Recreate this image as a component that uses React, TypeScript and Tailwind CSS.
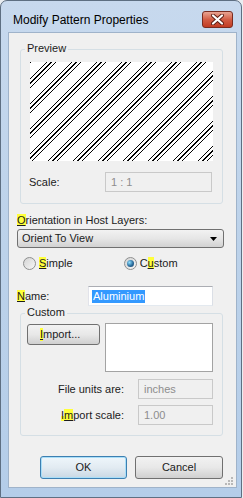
import React from 'react';

const font = { fontFamily: '"Liberation Sans", Arial, sans-serif' };

function Mn({ children }: { children: React.ReactNode }) {
  return <span className="bg-[#ffff3a] underline underline-offset-[1px]">{children}</span>;
}

function Hatch() {
  const lines: React.ReactNode[] = [];
  for (let k = -5; k < 12; k++) {
    for (let j = 0; j < 3; j++) {
      const x0 = 17 + k * 25 + j * 4.5;
      lines.push(<line key={`${k}-${j}`} x1={x0 - 99} y1={99} x2={x0} y2={0} stroke="#000" strokeWidth={1} />);
    }
  }
  return (
    <svg width="183" height="99" viewBox="0 0 183 99" className="block bg-white" shapeRendering="crispEdges">
      {lines}
    </svg>
  );
}

function Radio({ checked }: { checked?: boolean }) {
  return (
    <span className="flex h-[13px] w-[13px] items-center justify-center rounded-full border border-[#8e8f8f] bg-gradient-to-br from-[#d4d4d4] to-[#f7f7f7]">
      {checked && (
        <span className="h-[7px] w-[7px] rounded-full bg-[radial-gradient(circle_at_35%_35%,#8fe0ff,#2a6b9c_55%,#173d5c)]" />
      )}
    </span>
  );
}

function DisabledBox({ text, w }: { text: string; w: string }) {
  return (
    <div className={`flex h-[20px] ${w} items-center border border-[#c9c9c9] bg-[#f0f0f0] pl-[5px] text-[#8d8d8d]`}>
      {text}
    </div>
  );
}

export default function App() {
  return (
    <div className="h-[498px] w-[243px] bg-[#e9edf1] text-[11px] leading-[13px] text-[#1b1b1b]" style={font}>
      <div className="flex h-[498px] w-[242px] flex-col rounded-t-[7px] border border-[#5e6f82] bg-gradient-to-b from-[#c7d9ee] via-[#bcd2ea] to-[#b4cde9]">
        {/* title bar */}
        <div className="flex h-[31px] shrink-0 items-start justify-between pl-[12px] pr-[8px]">
          <span className="mt-[12px] text-[12px] leading-[14px] text-black">Modify Pattern Properties</span>
          <div className="mt-[10px] flex h-[17px] w-[31px] items-center justify-center rounded-[3px] border border-[#7a2c20] bg-gradient-to-b from-[#e8a493] via-[#d35d45] to-[#c13b22]">
            <svg width="13" height="11" viewBox="0 0 13 11">
              <path d="M2 1.5 L11 9.5 M11 1.5 L2 9.5" stroke="#5b1c12" strokeWidth="4" strokeLinecap="round" />
              <path d="M2 1.5 L11 9.5 M11 1.5 L2 9.5" stroke="#fff" strokeWidth="2.2" strokeLinecap="round" />
            </svg>
          </div>
        </div>

        {/* content */}
        <div className="relative ml-[7px] h-[456px] w-[229px] border border-[#9fb3ca] bg-[#f0f0f0]">
          {/* Preview group */}
          <div className="relative ml-[11px] mt-[16px] h-[155px] w-[203px] rounded-[3px] border border-[#d5dfe5]">
            <span className="absolute left-[4px] top-[-8px] bg-[#f0f0f0] px-[2px]">Preview</span>
            <div className="ml-[9px] mt-[12px]">
              <Hatch />
            </div>
            <div className="mt-[11px] flex items-center">
              <span className="ml-[8px] w-[76px]">Scale:</span>
              <DisabledBox text="1 : 1" w="w-[107px]" />
            </div>
          </div>

          <div className="ml-[8px] mt-[10px]">
            <Mn>O</Mn>rientation in Host Layers:
          </div>
          <div className="ml-[8px] mt-[2px] flex h-[19px] w-[207px] items-center justify-between rounded-[3px] border border-[#707070] bg-gradient-to-b from-[#f2f2f2] via-[#e6e6e6] to-[#d2d2d2] pl-[4px] pr-[6px]">
            <span>Orient To View</span>
            <svg width="7" height="4" viewBox="0 0 7 4">
              <path d="M0 0 H7 L3.5 4 Z" fill="#000" />
            </svg>
          </div>

          <div className="mt-[8px] flex h-[14px] items-center">
            <span className="ml-[14px]">
              <Radio />
            </span>
            <span className="ml-[3px]">
              <Mn>S</Mn>imple
            </span>
            <span className="ml-[51px]">
              <Radio checked />
            </span>
            <span className="ml-[3px]">
              C<Mn>u</Mn>stom
            </span>
          </div>

          <div className="mt-[16px] flex items-center">
            <span className="ml-[8px] w-[71px]">
              <Mn>N</Mn>ame:
            </span>
            <div className="flex h-[20px] w-[125px] items-center border border-[#abadb3] border-b-[#e3e9ef] border-l-[#e2e3ea] border-r-[#dbdfe6] bg-white pl-[3px]">
              <span className="bg-[#3399ff] px-[1px] text-white">Aluminium</span>
            </div>
          </div>

          {/* Custom group */}
          <div className="relative ml-[11px] mt-[7px] h-[123px] w-[203px] rounded-[3px] border border-[#d5dfe5]">
            <span className="absolute left-[4px] top-[-8px] bg-[#f0f0f0] px-[2px]">Custom</span>
            <div className="ml-[6px] mt-[9px] flex items-start">
              <div className="mt-[1px] flex h-[21px] w-[73px] items-center rounded-[3px] border border-[#707070] bg-gradient-to-b from-[#f2f2f2] via-[#e8e8e8] to-[#d0d0d0] pl-[12px]">
                <Mn>I</Mn>mport...
              </div>
              <div className="ml-[5px] h-[49px] w-[108px] border border-[#a3a3a3] bg-white" />
            </div>
            <div className="mt-[7px] flex items-center justify-end gap-[14px] pr-[9px]">
              <span>File units are:</span>
              <DisabledBox text="inches" w="w-[75px]" />
            </div>
            <div className="mt-[6px] flex items-center justify-end gap-[14px] pr-[9px]">
              <span>
                <span className="bg-gradient-to-b from-transparent from-[55%] to-[#ffff3a] to-[55%]">I</span>
                <Mn>m</Mn>port scale:
              </span>
              <DisabledBox text="1.00" w="w-[75px]" />
            </div>
          </div>

          {/* buttons */}
          <div className="ml-[31px] mt-[20px] flex gap-[8px]">
            <div className="flex h-[23px] w-[87px] items-center justify-center rounded-[3px] border border-[#3c7fb1] bg-gradient-to-b from-[#eef6fb] via-[#e2ebf2] to-[#c9d8e4] shadow-[inset_0_0_0_1px_#a9def8]">
              OK
            </div>
            <div className="flex h-[23px] w-[88px] items-center justify-center rounded-[3px] border border-[#707070] bg-gradient-to-b from-[#f2f2f2] via-[#e8e8e8] to-[#d0d0d0]">
              Cancel
            </div>
          </div>

          {/* size grip */}
          <svg width="9" height="9" viewBox="0 0 9 9" className="absolute bottom-[2px] right-[3px]">
            {[
              [7, 1],
              [7, 4],
              [4, 4],
              [7, 7],
              [4, 7],
              [1, 7],
            ].map(([x, y], i) => (
              <rect key={i} x={x} y={y} width="2" height="2" fill="#b8b8b8" />
            ))}
          </svg>
        </div>
      </div>
    </div>
  );
}
